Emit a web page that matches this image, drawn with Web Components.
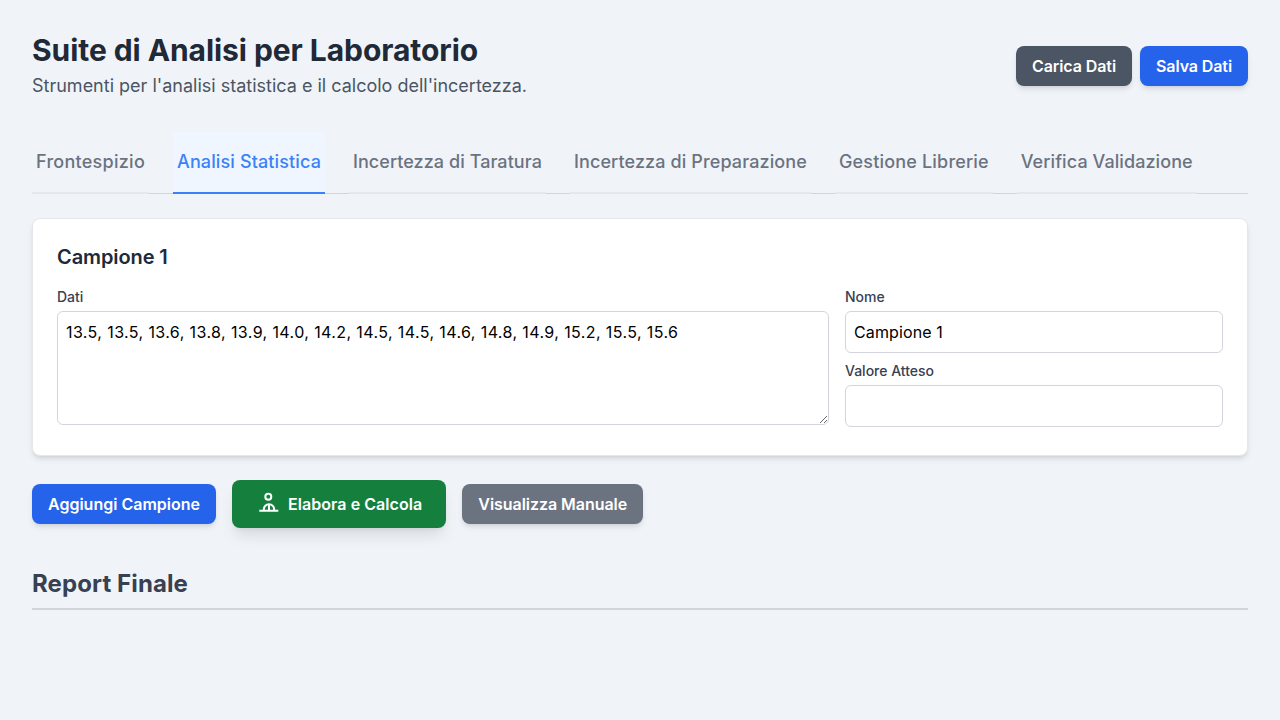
<!DOCTYPE html>
<html lang="it">
<head>
<meta charset="utf-8">
<title>Suite di Analisi per Laboratorio</title>
<style>
  html, body { margin: 0; background: #f0f4f8; }
  body { font-family: Inter, "Liberation Sans", sans-serif; color: #1f2937; }
</style>
</head>
<body>

<template id="lab-button">
  <style>
    :host { display: inline-block; }
    button {
      display: flex;
      align-items: center;
      gap: 8px;
      font: 600 16px/24px Inter, sans-serif;
      letter-spacing: var(--ls, 0);
      color: #fff;
      background: var(--bg, #2563eb);
      border: 0;
      border-radius: 8px;
      padding: 8px 16px;
      box-shadow: 0 4px 6px -1px rgba(0,0,0,.1), 0 2px 4px -2px rgba(0,0,0,.1);
    }
    :host([big]) button {
      padding: 12px 24px;
      box-shadow: 0 10px 15px -3px rgba(0,0,0,.1), 0 4px 6px -4px rgba(0,0,0,.1);
    }
    ::slotted(svg) { display: block; width: 24px; height: 24px; }
  </style>
  <button type="button"><slot></slot></button>
</template>

<template id="lab-tab">
  <style>
    :host { display: block; margin-right: 24px; }
    div {
      font-size: 18px;
      line-height: 28px;
      font-weight: 500;
      letter-spacing: var(--ls, 0);
      color: #6b7280;
      padding: 16px 4px;
      border-bottom: 2px solid #e5e7eb;
      white-space: nowrap;
    }
    :host([active]) div {
      color: #3b82f6;
      background: #eff6ff;
      border-bottom-color: #3b82f6;
    }
  </style>
  <div><slot></slot></div>
</template>

<template id="lab-field">
  <style>
    :host { display: block; }
    label {
      display: block;
      font-size: 14px;
      line-height: 20px;
      font-weight: 500;
      color: #374151;
      margin-bottom: 4px;
    }
    input, textarea {
      display: block;
      box-sizing: border-box;
      width: 100%;
      font: 400 16px/24px Inter, sans-serif;
      color: #000;
      background: #fff;
      border: 1px solid #d1d5db;
      border-radius: 6px;
      padding: 8px;
      margin: 0;
      outline: 0;
    }
    input { height: 42px; letter-spacing: .12px; }
    textarea { height: 114px; letter-spacing: .4px; }
  </style>
  <label></label>
</template>

<template id="lab-sample">
  <style>
    :host {
      display: block;
      background: #fff;
      border: 1px solid #e5e7eb;
      border-radius: 8px;
      padding: 24px 24px 28px;
      box-shadow: 0 4px 6px -1px rgba(0,0,0,.1), 0 2px 4px -2px rgba(0,0,0,.1);
    }
    h3 {
      margin: 0 0 16px;
      font-size: 20px;
      line-height: 28px;
      font-weight: 600;
      letter-spacing: -.1px;
      color: #1f2937;
    }
    .grid {
      display: grid;
      grid-template-columns: repeat(3, 1fr);
      gap: 16px;
    }
    .wide { grid-column: span 2; }
    .stack { display: flex; flex-direction: column; gap: 8px; }
  </style>
  <h3><slot name="title"></slot></h3>
  <div class="grid">
    <div class="wide"><slot name="data"></slot></div>
    <div class="stack"><slot name="side"></slot></div>
  </div>
</template>

<template id="lab-app">
  <style>
    :host { display: block; padding: 32px; }
    header {
      display: flex;
      justify-content: space-between;
      align-items: center;
      margin-bottom: 32px;
    }
    h1 {
      margin: 0;
      font-size: 30px;
      line-height: 36px;
      font-weight: 700;
      letter-spacing: -.065px;
      color: #1f2937;
    }
    p {
      margin: 4px 0 0;
      font-size: 18px;
      line-height: 28px;
      color: #4b5563;
    }
    .actions { display: flex; gap: 8px; }
    nav {
      display: flex;
      border-bottom: 1px solid #d1d5db;
      margin-bottom: 24px;
    }
    nav ::slotted(lab-tab) { margin-bottom: -1px; }
    .buttons {
      display: flex;
      align-items: center;
      gap: 16px;
      margin: 24px 0 40px;
    }
    h2 {
      margin: 0;
      font-size: 24px;
      line-height: 32px;
      font-weight: 700;
      letter-spacing: .11px;
      color: #374151;
      padding-bottom: 8px;
      border-bottom: 2px solid #d1d5db;
    }
  </style>
  <header>
    <div>
      <h1><slot name="title"></slot></h1>
      <p><slot name="subtitle"></slot></p>
    </div>
    <div class="actions"><slot name="actions"></slot></div>
  </header>
  <nav><slot name="tabs"></slot></nav>
  <slot></slot>
  <div class="buttons"><slot name="buttons"></slot></div>
  <h2><slot name="report"></slot></h2>
</template>

<lab-app>
  <span slot="title">Suite di Analisi per Laboratorio</span>
  <span slot="subtitle">Strumenti per l'analisi statistica e il calcolo dell'incertezza.</span>
  <lab-button slot="actions" style="--bg:#4b5563;--ls:-.09px">Carica Dati</lab-button>
  <lab-button slot="actions" style="--ls:-.1px">Salva Dati</lab-button>

  <lab-tab slot="tabs" style="--ls:.267px">Frontespizio</lab-tab>
  <lab-tab slot="tabs" style="--ls:.122px" active>Analisi Statistica</lab-tab>
  <lab-tab slot="tabs" style="--ls:.06px">Incertezza di Taratura</lab-tab>
  <lab-tab slot="tabs" style="--ls:.115px">Incertezza di Preparazione</lab-tab>
  <lab-tab slot="tabs" style="--ls:.176px">Gestione Librerie</lab-tab>
  <lab-tab slot="tabs" style="--ls:.08px">Verifica Validazione</lab-tab>

  <lab-sample>
    <span slot="title">Campione 1</span>
    <lab-field slot="data" label="Dati" multiline value="13.5, 13.5, 13.6, 13.8, 13.9, 14.0, 14.2, 14.5, 14.5, 14.6, 14.8, 14.9, 15.2, 15.5, 15.6"></lab-field>
    <lab-field slot="side" label="Nome" value="Campione 1"></lab-field>
    <lab-field slot="side" label="Valore Atteso"></lab-field>
  </lab-sample>

  <lab-button slot="buttons">Aggiungi Campione</lab-button>
  <lab-button slot="buttons" big style="--bg:#15803d;--ls:.06px">
    <svg viewBox="0 0 24 24" fill="none" stroke="#fff" stroke-width="2">
      <circle cx="12.3" cy="4.8" r="3"/>
      <path d="M7.8 18v-.5a5.2 5.2 0 0 1 10.4 0v.5M13 12.3V18M3.3 18.8h19"/>
    </svg>
    <span>Elabora e Calcola</span>
  </lab-button>
  <lab-button slot="buttons" style="--bg:#6b7280;--ls:-.05px">Visualizza Manuale</lab-button>

  <span slot="report">Report Finale</span>
</lab-app>

<script>
function shadow(host, id) {
  const root = host.attachShadow({mode: 'open'});
  root.appendChild(document.getElementById(id).content.cloneNode(true));
  return root;
}

class LabApp extends HTMLElement {
  constructor() { super(); shadow(this, 'lab-app'); }
}

class LabButton extends HTMLElement {
  constructor() { super(); shadow(this, 'lab-button'); }
}

class LabTab extends HTMLElement {
  constructor() { super(); shadow(this, 'lab-tab'); }
}

class LabSample extends HTMLElement {
  constructor() { super(); shadow(this, 'lab-sample'); }
}

class LabField extends HTMLElement {
  constructor() {
    super();
    this.root = shadow(this, 'lab-field');
  }

  connectedCallback() {
    this.root.querySelector('label').textContent = this.getAttribute('label');
    const value = this.getAttribute('value') || '';
    let el;
    if (this.hasAttribute('multiline')) {
      el = document.createElement('textarea');
      el.textContent = value;
    } else {
      el = document.createElement('input');
      el.setAttribute('value', value);
    }
    this.root.appendChild(el);
  }
}

customElements.define('lab-app', LabApp);
customElements.define('lab-button', LabButton);
customElements.define('lab-tab', LabTab);
customElements.define('lab-sample', LabSample);
customElements.define('lab-field', LabField);
</script>
</body>
</html>
